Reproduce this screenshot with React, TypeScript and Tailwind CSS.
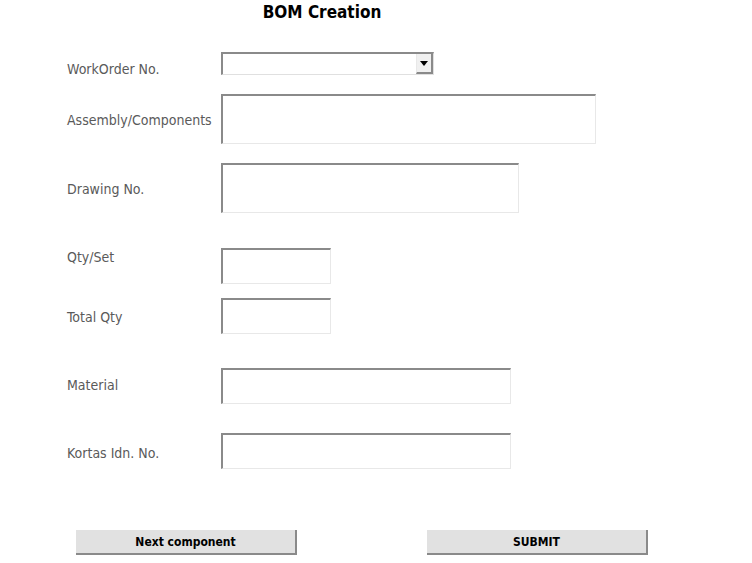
import React from "react";

const font = { fontFamily: "'DejaVu Sans Condensed', 'DejaVu Sans', Tahoma, sans-serif" };

function Field({ w, h }: { w: string; h: string }) {
  return (
    <input
      className={`${w} ${h} bg-white border-t-2 border-l-2 border-r border-b border-t-[#8a8a8a] border-l-[#8a8a8a] border-r-[#e8e8e8] border-b-[#e8e8e8] outline-none`}
    />
  );
}

export default function App() {
  return (
    <div className="w-[752px] h-[563px] bg-white text-[14px] text-[#5a5a5a]" style={font}>
      {/* Title */}
      <div className="w-[644px] pt-[1px] text-center text-[17px] font-bold text-black leading-[22px]">
        BOM Creation
      </div>

      <div className="pl-[67px]">
        {/* WorkOrder */}
        <div className="flex h-[23px] mt-[29px]">
          <label className="w-[154px] pt-[7px] leading-5 whitespace-nowrap">WorkOrder No.</label>
          <div className="flex w-[213px] h-[23px] bg-white border-t-2 border-l-2 border-r border-b border-t-[#8a8a8a] border-l-[#8a8a8a] border-r-[#e0e0e0] border-b-[#e0e0e0]">
            <div className="flex-1" />
            <div className="w-[17px] h-full bg-[#f0f0f0] border-l border-l-[#e8e8e8] border-r-2 border-b-2 border-r-[#8a8a8a] border-b-[#8a8a8a] flex items-center justify-center">
              <svg width="8" height="5" viewBox="0 0 8 5">
                <path d="M0 0h8L4 5z" fill="#000" />
              </svg>
            </div>
          </div>
        </div>

        {/* Assembly */}
        <div className="flex mt-[19px]">
          <label className="w-[154px] pt-[16px] leading-5">Assembly/Components</label>
          <Field w="w-[375px]" h="h-[50px]" />
        </div>

        {/* Drawing */}
        <div className="flex mt-[19px]">
          <label className="w-[154px] pt-[16px] leading-5">Drawing No.</label>
          <Field w="w-[298px]" h="h-[50px]" />
        </div>

        {/* Qty/Set */}
        <div className="flex mt-[35px]">
          <label className="w-[154px] leading-5 -mt-[1px]">Qty/Set</label>
          <Field w="w-[110px]" h="h-[36px]" />
        </div>

        {/* Total Qty */}
        <div className="flex mt-[14px]">
          <label className="w-[154px] pt-[9px] leading-5">Total Qty</label>
          <Field w="w-[110px]" h="h-[36px]" />
        </div>

        {/* Material */}
        <div className="flex mt-[34px]">
          <label className="w-[154px] pt-[7px] leading-5">Material</label>
          <Field w="w-[290px]" h="h-[36px]" />
        </div>

        {/* Kortas */}
        <div className="flex mt-[29px]">
          <label className="w-[154px] pt-[10px] leading-5">Kortas Idn. No.</label>
          <Field w="w-[290px]" h="h-[36px]" />
        </div>
      </div>

      {/* Buttons */}
      <div className="flex pl-[76px] mt-[61px] gap-[130px]">
        <button className="w-[221px] h-[25px] bg-[#e1e1e1] border-r-2 border-b-2 border-[#8a8a8a] text-[12px] font-bold text-black">
          Next component
        </button>
        <button className="w-[221px] h-[25px] bg-[#e1e1e1] border-r-2 border-b-2 border-[#8a8a8a] text-[12px] font-bold text-black">
          SUBMIT
        </button>
      </div>
    </div>
  );
}
